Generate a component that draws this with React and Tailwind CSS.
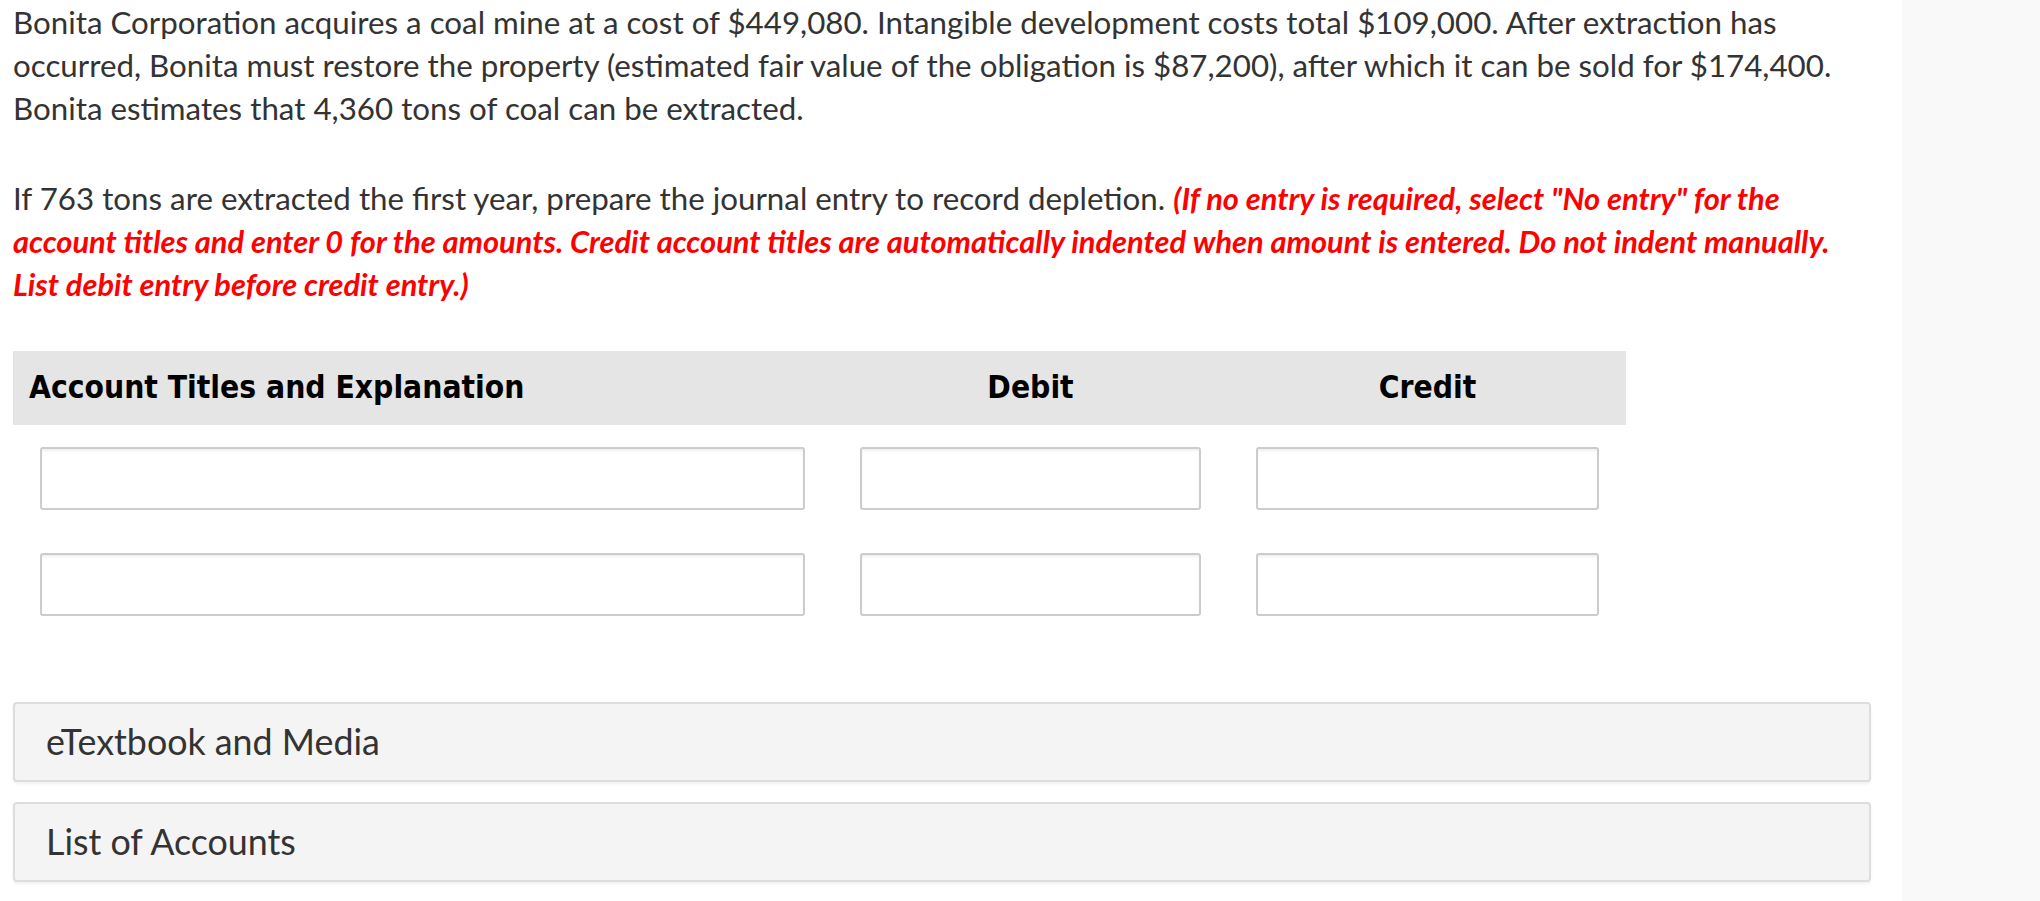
export default function App() {
  const rows = [0, 1];
  const inputCls =
    "h-[63px] w-full rounded-[3px] border-2 border-[#cccccc] bg-white shadow-[inset_0_2px_2px_rgba(0,0,0,0.06)] outline-none";

  return (
    <div className="flex min-h-[901px] w-full bg-white font-['Lato',sans-serif] text-[#333333]">
      <main className="w-[1902px] shrink-0 pl-[13px] pr-[31px] pt-[1px]">
        <p className="text-[31.3px] leading-[43px]">
          Bonita Corporation acquires a coal mine at a cost of $449,080. Intangible development costs total $109,000. After extraction has occurred, Bonita must restore the property (estimated fair value of the obligation is $87,200), after which it can be sold for $174,400. Bonita estimates that 4,360 tons of coal can be extracted.
        </p>

        <p className="mt-[47px] text-[31.3px] leading-[43px]">
          If 763 tons are extracted the first year, prepare the journal entry to record depletion.{" "}
          <span className="text-[30.8px] font-bold italic text-[#ff0000]">
            (If no entry is required, select "No entry" for the account titles and enter 0 for the amounts. Credit account titles are automatically indented when amount is entered. Do not indent manually. List debit entry before credit entry.)
          </span>
        </p>

        {/* journal table */}
        <div className="mt-[45px] w-[1613px]">
          <div className="grid h-[74px] grid-cols-[819px_397px_397px] items-center bg-[#e5e5e5] font-['DejaVu_Sans_Condensed','DejaVu_Sans',sans-serif] text-[31.5px] font-bold text-black">
            <div className="pl-[16px]">Account Titles and Explanation</div>
            <div className="text-center">Debit</div>
            <div className="text-center">Credit</div>
          </div>
          <div className="flex flex-col gap-[43px] pt-[22px]">
            {rows.map((r) => (
              <div key={r} className="grid grid-cols-[819px_397px_397px]">
                <div className="px-[27px]">
                  <input className={inputCls} />
                </div>
                <div className="px-[28px]">
                  <input className={inputCls} />
                </div>
                <div className="px-[27px]">
                  <input className={inputCls} />
                </div>
              </div>
            ))}
          </div>
        </div>

        {/* accordions */}
        <div className="mt-[86px] flex w-[1858px] flex-col gap-[20px]">
          <div className="flex h-[80px] items-center rounded-[4px] border-2 border-[#dddddd] bg-[#f4f4f4] pl-[31px] text-[35.8px] shadow-[0_2px_3px_rgba(0,0,0,0.06)]">
            eTextbook and Media
          </div>
          <div className="flex h-[80px] items-center rounded-[4px] border-2 border-[#dddddd] bg-[#f4f4f4] pl-[31px] text-[35.8px] shadow-[0_2px_3px_rgba(0,0,0,0.06)]">
            List of Accounts
          </div>
        </div>
      </main>
      <aside className="flex-1 bg-[#f9f9f9]" />
    </div>
  );
}
